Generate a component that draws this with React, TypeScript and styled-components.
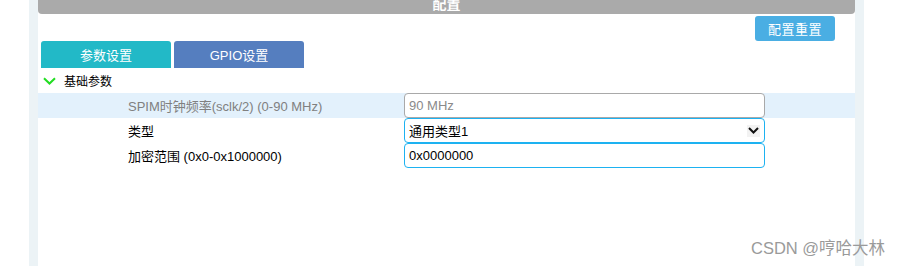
import React from "react";
import styled, { createGlobalStyle } from "styled-components";

const Global = createGlobalStyle`
  html, body { margin: 0; padding: 0; background: #fff; }
  body { font-family: "Liberation Sans", Arial, "Noto Sans CJK SC", sans-serif; font-size: 13px; color: #000; }
  * { box-sizing: border-box; }
`;

const Page = styled.div`
  position: relative;
  width: 902px;
  height: 266px;
  overflow: hidden;
  display: flex;
  background: #fff;
`;

const Gutter = styled.div<{ $w: number }>`
  width: ${(p) => p.$w}px;
  flex: none;
`;

const Strip = styled.div`
  width: 9px;
  flex: none;
  background: #ecf3f6;
`;

const Main = styled.div`
  width: 817px;
  flex: none;
  display: flex;
  flex-direction: column;
  background: #fff;
`;

const TitleBar = styled.div`
  height: 14px;
  background: #aaaaaa;
  border-radius: 0 0 4px 4px;
  overflow: hidden;
  display: flex;
  justify-content: center;
  color: #fff;
  font-weight: bold;
  font-size: 14px;
  font-family: "Noto Sans CJK SC", sans-serif;
`;

const TitleText = styled.span`
  line-height: 14px;
  margin-top: -4px;
  height: 18px;
`;

const ToolRow = styled.div`
  display: flex;
  justify-content: flex-end;
  padding: 2px 20px 0 0;
`;

const ResetButton = styled.button`
  width: 80px;
  height: 25px;
  border: none;
  border-radius: 3px;
  background: #4aaee3;
  color: #fff;
  font-family: "Noto Sans CJK SC", sans-serif;
  font-size: 13px;
  padding: 0;
  letter-spacing: 0.5px;
`;

const Tabs = styled.div`
  display: flex;
  gap: 3px;
  padding-left: 3px;
`;

const Tab = styled.div<{ $bg: string }>`
  width: 130px;
  height: 27px;
  background: ${(p) => p.$bg};
  border-radius: 3px 3px 0 0;
  color: #fff;
  display: flex;
  align-items: center;
  justify-content: center;
  font-size: 13px;
  font-family: "Liberation Sans", Arial, "Noto Sans CJK SC", sans-serif;
`;

const Section = styled.div`
  height: 25px;
  display: flex;
  align-items: center;
  gap: 8px;
  padding-left: 5px;
  font-size: 12px;
  font-family: "Noto Sans CJK SC", sans-serif;
  color: #000;
`;

const Row = styled.div<{ $hl?: boolean }>`
  height: 25px;
  display: flex;
  align-items: center;
  background: ${(p) => (p.$hl ? "#e3f1fc" : "transparent")};
`;

const Label = styled.div<{ $muted?: boolean }>`
  width: 366px;
  padding-left: 90px;
  color: ${(p) => (p.$muted ? "#808080" : "#000")};
  font-size: 13px;
  white-space: nowrap;
`;

const Field = styled.div<{ $focus?: boolean }>`
  width: 361px;
  height: 25px;
  border: 1px solid ${(p) => (p.$focus ? "#1db2f1" : "#a9a9a9")};
  border-radius: 4px;
  background: #fff;
  display: flex;
  align-items: center;
  padding: 0 4px;
  font-size: 13px;
  color: #000;
`;

const Placeholder = styled.span`
  color: #8a8a8a;
`;

const FieldText = styled.span`
  flex: 1;
`;

const Arrow = styled.span`
  width: 13px;
  height: 12px;
  background: #f2f2f2;
  display: flex;
  align-items: center;
  justify-content: center;
  margin-right: 0;
`;

const Watermark = styled.div`
  position: absolute;
  left: 751px;
  top: 235px;
  font-size: 16.5px;
  color: #9a9a9a;
  font-family: "Liberation Sans", Arial, "Noto Sans CJK SC", sans-serif;
  white-space: nowrap;
`;

export default function App() {
  return (
    <>
      <Global />
      <Page>
        <Gutter $w={29} />
        <Strip />
        <Main>
          <TitleBar>
            <TitleText>配置</TitleText>
          </TitleBar>
          <ToolRow>
            <ResetButton>配置重置</ResetButton>
          </ToolRow>
          <Tabs>
            <Tab $bg="#22b9c7">参数设置</Tab>
            <Tab $bg="#557ebf">GPIO设置</Tab>
          </Tabs>
          <Section>
            <svg width="13" height="8" viewBox="0 0 13 8">
              <path d="M1 1.2 L6.5 6.5 L12 1.2" fill="none" stroke="#22dd22" strokeWidth="2" />
            </svg>
            <span>基础参数</span>
          </Section>
          <Row $hl>
            <Label $muted>SPIM时钟频率(sclk/2) (0-90 MHz)</Label>
            <Field>
              <Placeholder>90 MHz</Placeholder>
            </Field>
          </Row>
          <Row>
            <Label>类型</Label>
            <Field $focus>
              <FieldText>通用类型1</FieldText>
              <Arrow>
                <svg width="11" height="7" viewBox="0 0 11 7">
                  <path d="M1 1 L5.5 5.5 L10 1" fill="none" stroke="#111" strokeWidth="2" />
                </svg>
              </Arrow>
            </Field>
          </Row>
          <Row>
            <Label>加密范围 (0x0-0x1000000)</Label>
            <Field $focus>
              <FieldText>0x0000000</FieldText>
            </Field>
          </Row>
        </Main>
        <Strip />
        <Watermark>CSDN @哼哈大林</Watermark>
      </Page>
    </>
  );
}
